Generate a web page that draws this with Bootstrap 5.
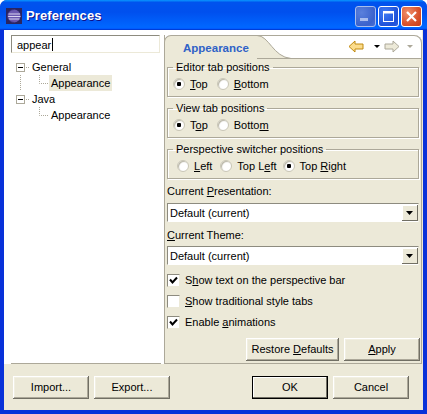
<!DOCTYPE html>
<html lang="en">
<head>
    <meta charset="UTF-8">
    <meta name="viewport" content="width=device-width, initial-scale=1.0">
    <title>Preferences</title>
    <link rel="stylesheet" href="https://cdn.jsdelivr.net/npm/bootstrap@5.3.0/dist/css/bootstrap.min.css">
    <style>
        html, body { height: 100%; overflow: hidden; background: #fff; }
        body { font: 11px/13px "Liberation Sans", Arial, sans-serif; color: #000; }
        u { text-underline-offset: 1px; }

        /* window frame */
        .xp-win { width: 427px; height: 414px; background: #0831d9; border-radius: 7px 7px 0 0; padding-bottom: 4px; overflow: hidden; }
        .xp-title { height: 30px; padding: 2px 5px 0 6px; background: linear-gradient(180deg, #0997ff, #0053ee 8%, #0050ee 40%, #06f 88%, #06f 93%, #005bff 95%, #003dd7 96%, #003dd7); }
        .xp-title-text { font: bold 13px/18px "Liberation Sans", sans-serif; letter-spacing: .1px; color: #fff; text-shadow: 1px 1px 0 #0f1089; margin-left: 4px; }
        .xp-winbtns { gap: 2px; }
        .xp-winbtn { width: 21px; height: 21px; border: 1px solid #fff; border-radius: 3px; background: radial-gradient(circle at 30% 30%, #3f7df5, #1e50d8 70%, #2a5fe0); }
        .xp-winbtn.is-min { background: radial-gradient(circle at 30% 30%, #5a80dc, #3a62cc 70%, #4a70d4); border-color: #a8bdec; }
        .xp-winbtn.is-close { background: radial-gradient(circle at 30% 30%, #f0906c, #d8522c 60%, #c83c18); }
        .xp-body { margin: 0 4px; height: 380px; background: #ece9d8; }

        /* left pane */
        .xp-left { width: 160px; height: 334px; background: #fff; padding: 5px 3px 0 7px; }
        .xp-search { height: 18px; width: 149px; padding: 2px 0 0 5px; border: 1px solid #ece9d8; border-top-color: #8d8b7f; border-left-color: #8d8b7f; }
        .xp-caret { display: inline-block; width: 1px; height: 13px; background: #000; vertical-align: -2px; margin-left: 1px; }
        .xp-tree { border-bottom: 1px solid #aca899; padding: 6px 0 0 5px; }
        .xp-node { height: 16px; }
        .xp-node span { padding: 0 2px; line-height: 16px; }
        .xp-node span.is-sel { background: #ece9d8; }

        /* tab folder */
        .xp-folder { width: 258px; height: 334px; padding-top: 5px; background: #fff; }
        .xp-folder-in { border: 1px solid #aca899; border-top: 0; border-radius: 0 8px 0 0; background: #ece9d8; }
        .xp-tabbar { height: 24px; background: #fff; border-radius: 0 8px 0 0; margin-right: -1px; }
        .xp-tab { width: 93px; border-top: 1px solid #aca899; background: #ece9d8; border-radius: 7px 0 0 0; padding: 6px 0 0 18px; font-weight: bold; font-size: 11.5px; color: #2f62c7; margin-left: -1px; border-left: 1px solid #aca899; }
        .xp-tools { border-top: 1px solid #aca899; border-bottom: 1px solid #aca899; border-right: 1px solid #aca899; border-radius: 0 8px 0 0; padding: 4px 8px 0 0; margin-left: -35px; }
        .xp-page { padding: 2px 1px 2px 2px; }
        .xp-group { border: 1px solid #aca899; box-shadow: 1px 1px 0 #fff, inset 1px 1px 0 #fff; padding: 1px 5px 5px 5px; margin: 0 1px 5px 0; height: 36px; min-width: 0; }
        .xp-group legend { float: none; width: auto; font-size: 11px; line-height: 13px; padding: 0 3px; margin: 0; }
        .xp-radios { height: 16px; margin-top: 1px; }
        .xp-radio { appearance: none; width: 12px; height: 12px; margin: 0 5px 0 0; border-radius: 50%; background: #fff; border: 1px solid #c9c6b6; box-shadow: inset 1px 1px 1px #b8b5a5; flex: none; }
        .xp-radio:checked { background: radial-gradient(circle, #000 0 2px, #fff 2.5px); }
        .xp-radio.next-a { margin-left: 9px; }
        .xp-radio.next-b { margin-left: 8px; }
        .xp-radio.next-c { margin-left: 6px; }
        .xp-label { line-height: 13px; }
        .xp-label.is-first { margin: 1px 0 5px; }
        .xp-label.is-second { margin: 7px 0 4px; }
        .xp-combo { height: 19px; border: 1px solid #8d8b7f; border-right-color: #ece9d8; border-bottom-color: #fff; background: #fff; padding: 2px 0 0 2px; margin-right: 1px; line-height: 15px; }
        .xp-combo-btn { width: 16px; height: 16px; margin: -1px 0 0 auto; background: #ece9d8; box-shadow: inset -1px -1px #716f64, inset 1px 1px #fff; }
        .xp-checks { margin-top: 9px; }
        .xp-check { height: 13px; margin-bottom: 8px; }
        .xp-box { appearance: none; width: 13px; height: 13px; margin: 0 5px 0 0; background: #fff center no-repeat; border: 1px solid #8d8b7f; border-right-color: #ece9d8; border-bottom-color: #ece9d8; flex: none; }
        .xp-box:checked { background-image: url("data:image/svg+xml,%3Csvg xmlns='http://www.w3.org/2000/svg' width='9' height='9'%3E%3Cpath d='M1 3.5 3.5 6.5 8 1.5' fill='none' stroke='%23000' stroke-width='2'/%3E%3C/svg%3E"); }
        .btn.xp-btn { width: 76px; height: 23px; padding: 0; border: 0; border-radius: 0; background: #ece9d8; color: #000; font-size: 11px; line-height: 21px; box-shadow: inset -1px -1px #716f64, inset 1px 1px #fff, inset -2px -2px #aca899, inset 2px 2px #f1efe2; }
        .btn.xp-btn.is-wide { width: 93px; }
        .btn.xp-btn.is-default { box-shadow: 0 0 0 1px #000 inset, inset -2px -2px #716f64, inset 2px 2px #fff; }
        .xp-btnrow { gap: 5px; }
        .xp-bottom { height: 46px; padding: 12px 14px 0 9px; }
    </style>
</head>
<body>
    <div class="xp-win">
        <!-- Title bar -->
        <div class="xp-title d-flex align-items-center">
            <svg width="16" height="16" viewBox="0 0 16 16" class="flex-shrink-0">
                <rect width="16" height="16" fill="#2a2560"/>
                <circle cx="8" cy="8" r="6.5" fill="#6a58b0"/>
                <path d="M2 6h12M1.5 8.5h13M2.5 11h11" stroke="#d9d4f0" stroke-width="1"/>
                <path d="M8 1.5a6.5 6.5 0 0 0 0 13" fill="none" stroke="#3c3080" stroke-width="1"/>
            </svg>
            <div class="xp-title-text">Preferences</div>
            <div class="ms-auto d-flex xp-winbtns">
                <div class="xp-winbtn is-min d-flex align-items-center justify-content-center">
                    <svg width="19" height="19"><rect x="4" y="11" width="8" height="3" fill="#a9bdee"/></svg>
                </div>
                <div class="xp-winbtn d-flex align-items-center justify-content-center">
                    <svg width="19" height="19"><rect x="4.5" y="4.5" width="10" height="10" fill="none" stroke="#fff"/><rect x="4" y="4" width="11" height="2.5" fill="#fff"/></svg>
                </div>
                <div class="xp-winbtn is-close d-flex align-items-center justify-content-center">
                    <svg width="19" height="19"><path d="M5 5 14 14M14 5 5 14" stroke="#fff" stroke-width="2.2"/></svg>
                </div>
            </div>
        </div>

        <div class="xp-body d-flex flex-column">
            <div class="d-flex">
                <!-- Filter and tree -->
                <div class="xp-left d-flex flex-column">
                    <div class="xp-search">appear<span class="xp-caret"></span></div>
                    <div class="xp-tree flex-grow-1">
                        <div class="xp-node d-flex">
                            <svg width="14" height="16" class="flex-shrink-0">
                                <rect x="0.5" y="4.5" width="8" height="8" fill="#fff" stroke="#aca899"/>
                                <path d="M2 8.5h5" stroke="#000"/>
                                <path d="M10 8.5h1M12 8.5h1" stroke="#aca899"/>
                            </svg>
                            <span>General</span>
                        </div>
                        <div class="xp-node d-flex">
                            <svg width="33" height="16" class="flex-shrink-0">
                                <path d="M4.5 0v19" stroke="#aca899" stroke-dasharray="1 1"/>
                                <path d="M23.5 0v8.5H32" fill="none" stroke="#aca899" stroke-dasharray="1 1"/>
                            </svg>
                            <span class="is-sel">Appearance</span>
                        </div>
                        <div class="xp-node d-flex">
                            <svg width="14" height="16" class="flex-shrink-0">
                                <rect x="0.5" y="4.5" width="8" height="8" fill="#fff" stroke="#aca899"/>
                                <path d="M2 8.5h5" stroke="#000"/>
                                <path d="M10 8.5h1M12 8.5h1" stroke="#aca899"/>
                            </svg>
                            <span>Java</span>
                        </div>
                        <div class="xp-node d-flex">
                            <svg width="33" height="16" class="flex-shrink-0">
                                <path d="M23.5 0v8.5H32" fill="none" stroke="#aca899" stroke-dasharray="1 1"/>
                            </svg>
                            <span>Appearance</span>
                        </div>
                    </div>
                </div>

                <!-- Tab folder -->
                <div class="xp-folder">
                    <div class="xp-folder-in h-100 d-flex flex-column">
                        <div class="xp-tabbar d-flex">
                            <div class="xp-tab">Appearance</div>
                            <svg width="35" height="24" class="flex-shrink-0">
                                <path d="M0 0C12 0 16 22 34 23H35V24H0Z" fill="#ece9d8"/>
                                <path d="M0 .5C12 .5 16 22 34 23.5H35" fill="none" stroke="#aca899"/>
                            </svg>
                            <div class="xp-tools flex-grow-1 d-flex justify-content-end">
                                <svg width="65" height="14" class="flex-shrink-0">
                                    <path d="M1 6.5 7 1V4H15V9H7V12Z" fill="#fbdc8c" stroke="#c08a10"/>
                                    <path d="M26 5h6l-3 3Z" fill="#000"/>
                                    <path d="M51 6.5 45 1V4H37V9H45V12Z" fill="#ece9d8" stroke="#aca899"/>
                                    <path d="M59 5h6l-3 3Z" fill="#aca899"/>
                                </svg>
                            </div>
                        </div>
                        <div class="xp-page flex-grow-1 d-flex flex-column">
                            <fieldset class="xp-group">
                                <legend>Editor tab positions</legend>
                                <div class="xp-radios d-flex align-items-center">
                                    <input type="radio" class="xp-radio" name="editorTab" checked><span class="xp-label"><u>T</u>op</span>
                                    <input type="radio" class="xp-radio next-a" name="editorTab"><span class="xp-label"><u>B</u>ottom</span>
                                </div>
                            </fieldset>
                            <fieldset class="xp-group">
                                <legend>View tab positions</legend>
                                <div class="xp-radios d-flex align-items-center">
                                    <input type="radio" class="xp-radio" name="viewTab" checked><span class="xp-label">T<u>o</u>p</span>
                                    <input type="radio" class="xp-radio next-a" name="viewTab"><span class="xp-label">Botto<u>m</u></span>
                                </div>
                            </fieldset>
                            <fieldset class="xp-group">
                                <legend>Perspective switcher positions</legend>
                                <div class="xp-radios d-flex align-items-center ps-1">
                                    <input type="radio" class="xp-radio" name="switcher"><span class="xp-label"><u>L</u>eft</span>
                                    <input type="radio" class="xp-radio next-b" name="switcher"><span class="xp-label">Top L<u>e</u>ft</span>
                                    <input type="radio" class="xp-radio next-c" name="switcher" checked><span class="xp-label">Top <u>R</u>ight</span>
                                </div>
                            </fieldset>
                            <div class="xp-label is-first">Current <u>P</u>resentation:</div>
                            <div class="xp-combo d-flex">
                                <span>Default (current)</span>
                                <div class="xp-combo-btn d-flex align-items-center justify-content-center">
                                    <svg width="8" height="5"><path d="M0 0h7L3.5 4Z" fill="#000"/></svg>
                                </div>
                            </div>
                            <div class="xp-label is-second"><u>C</u>urrent Theme:</div>
                            <div class="xp-combo d-flex">
                                <span>Default (current)</span>
                                <div class="xp-combo-btn d-flex align-items-center justify-content-center">
                                    <svg width="8" height="5"><path d="M0 0h7L3.5 4Z" fill="#000"/></svg>
                                </div>
                            </div>
                            <div class="xp-checks">
                                <div class="xp-check d-flex align-items-center">
                                    <input type="checkbox" class="xp-box" checked><span class="xp-label">S<u>h</u>ow text on the perspective bar</span>
                                </div>
                                <div class="xp-check d-flex align-items-center">
                                    <input type="checkbox" class="xp-box"><span class="xp-label"><u>S</u>how traditional style tabs</span>
                                </div>
                                <div class="xp-check d-flex align-items-center">
                                    <input type="checkbox" class="xp-box" checked><span class="xp-label">Enable <u>a</u>nimations</span>
                                </div>
                            </div>
                            <div class="d-flex justify-content-end mt-auto xp-btnrow">
                                <button class="btn xp-btn is-wide">Restore <u>D</u>efaults</button>
                                <button class="btn xp-btn"><u>A</u>pply</button>
                            </div>
                        </div>
                    </div>
                </div>
            </div>

            <!-- Dialog buttons -->
            <div class="xp-bottom d-flex xp-btnrow">
                <button class="btn xp-btn">Import...</button>
                <button class="btn xp-btn">Export...</button>
                <button class="btn xp-btn is-default ms-auto">OK</button>
                <button class="btn xp-btn">Cancel</button>
            </div>
        </div>
    </div>
    <script src="https://cdn.jsdelivr.net/npm/bootstrap@5.3.0/dist/js/bootstrap.bundle.min.js"></script>
</body>
</html>
